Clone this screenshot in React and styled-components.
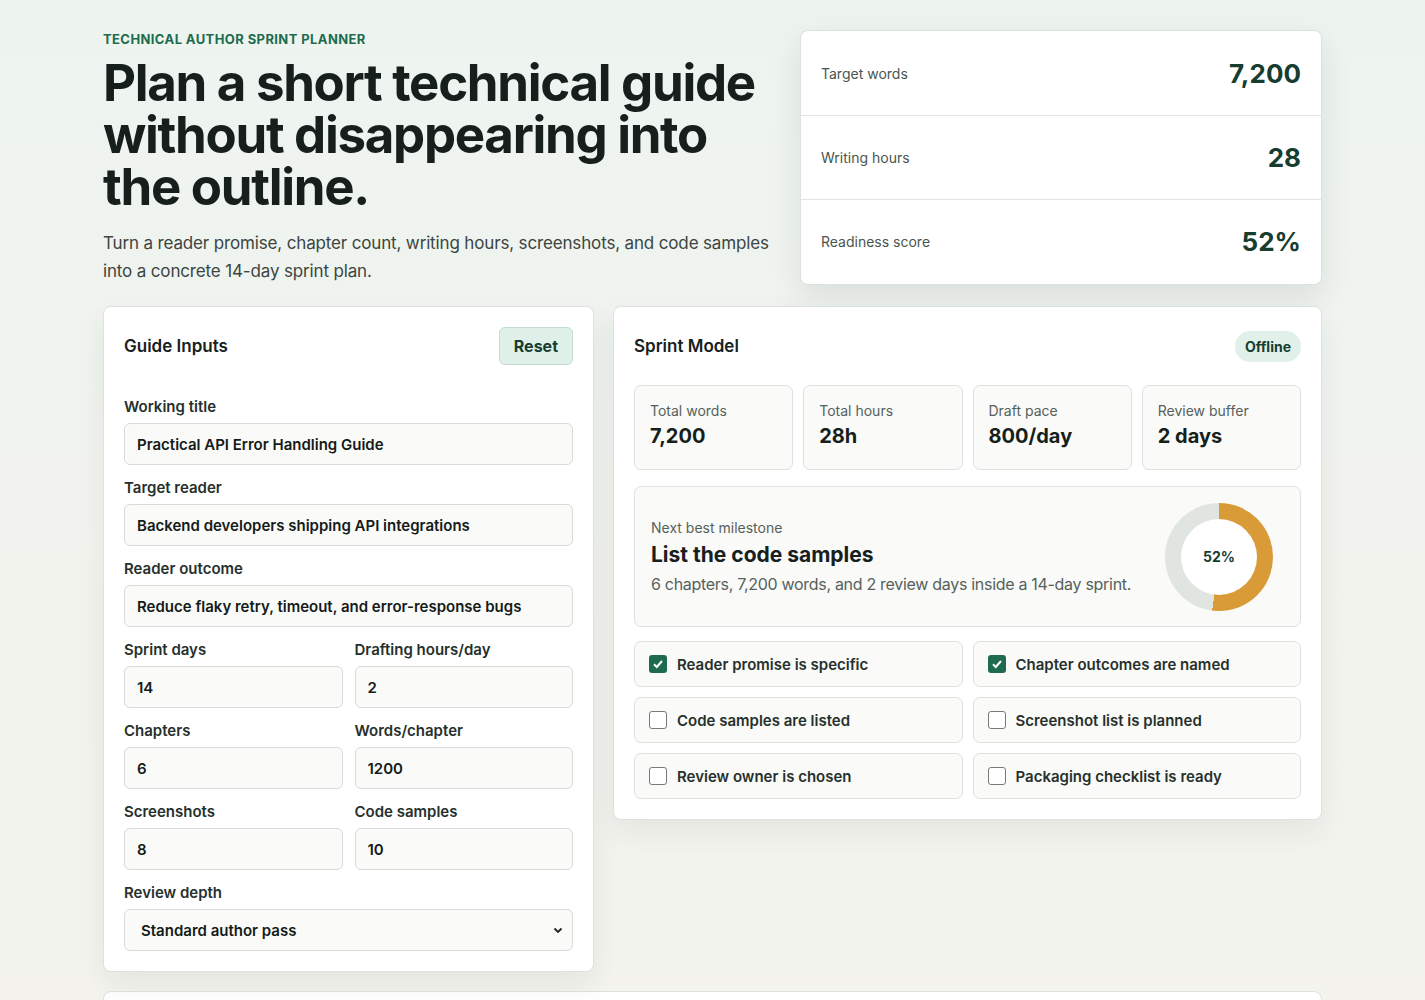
import { createGlobalStyle } from "styled-components";
import styled from "styled-components";

const Global = createGlobalStyle`
  body {
    margin: 0;
    font-family: Inter, "Noto Sans", sans-serif;
    color: #17201c;
    background: linear-gradient(180deg, #edf4f0 0%, #f3f3ee 60%, #f4f3ee 100%);
    min-height: 100vh;
  }
  * { box-sizing: border-box; }
`;

const Page = styled.div`
  width: 1219px;
  margin: 0 auto;
  padding: 30px 0 0 0;
`;

const Header = styled.div`
  display: flex;
  justify-content: space-between;
  gap: 20px;
`;

const Intro = styled.div`
  padding-top: 1px;
  width: 690px;
`;

const Eyebrow = styled.div`
  font-size: 13px;
  font-weight: 700;
  color: #1e6b4f;
  letter-spacing: 0.4px;
`;

const Title = styled.h1`
  margin: 10px 0 0;
  font-size: 51px;
  line-height: 52px;
  font-weight: 700;
  letter-spacing: -1.3px;
  color: #161f1b;
`;

const Lead = styled.p`
  margin: 16px 0 0;
  font-size: 17px;
  line-height: 28px;
  color: #3b4541;
  letter-spacing: -0.15px;
`;

const StatsCard = styled.div`
  width: 522px;
  flex-shrink: 0;
  background: #fff;
  border: 1px solid #dde2de;
  border-radius: 8px;
  box-shadow: 0 12px 30px rgba(30, 50, 40, 0.1);
  overflow: hidden;
`;

const StatRow = styled.div`
  height: 84px;
  display: flex;
  align-items: center;
  justify-content: space-between;
  padding: 0 20px;
  border-top: ${(p) => (p.first ? "none" : "1px solid #e2e6e3")};
`;

const StatLabel = styled.span`
  font-size: 14px;
  color: #4a5550;
`;

const StatValue = styled.span`
  font-size: 26px;
  font-weight: 700;
  color: #173d30;
`;

const Main = styled.div`
  display: grid;
  grid-template-columns: 491px 1fr;
  gap: 19px;
  margin-top: 21px;
  align-items: start;
`;

const Panel = styled.div`
  background: #fff;
  border: 1px solid #dde2de;
  border-radius: 8px;
  padding: 20px;
  box-shadow: 0 12px 30px rgba(30, 50, 40, 0.07);
`;

const PanelHead = styled.div`
  display: flex;
  justify-content: space-between;
  align-items: center;
  height: 38px;
  margin-bottom: ${(p) => p.mb}px;
`;

const PanelTitle = styled.h2`
  margin: 0;
  font-size: 17px;
  font-weight: 600;
`;

const ResetButton = styled.button`
  font-family: inherit;
  font-size: 16px;
  font-weight: 700;
  color: #173d30;
  background: #dff0e8;
  border: 1px solid #c3ddd0;
  border-radius: 6px;
  height: 38px;
  padding: 0 14px;
`;

const Pill = styled.span`
  font-size: 14px;
  font-weight: 700;
  color: #173d30;
  background: #e1f1e9;
  border-radius: 15px;
  padding: 7px 10px;
`;

const Form = styled.div`
  display: flex;
  flex-direction: column;
  gap: 13px;
`;

const Row2 = styled.div`
  display: grid;
  grid-template-columns: 1fr 1fr;
  gap: 12px;
`;

const Field = styled.label`
  display: flex;
  flex-direction: column;
  gap: 7px;
`;

const FieldLabel = styled.span`
  font-size: 15px;
  font-weight: 600;
  color: #26302c;
`;

const Input = styled.div`
  height: 42px;
  border: 1px solid #d6dcd8;
  border-radius: 6px;
  background: #fafaf8;
  display: flex;
  align-items: center;
  justify-content: space-between;
  padding: 0 ${(p) => (p.select ? "8px 0 16px" : "12px")};
  font-size: 15px;
  font-weight: 600;
  color: #141b18;
`;

const Metrics = styled.div`
  display: grid;
  grid-template-columns: repeat(4, 1fr);
  gap: 10px;
`;

const Metric = styled.div`
  height: 85px;
  border: 1px solid #dde2de;
  border-radius: 7px;
  background: #fafaf8;
  padding: 16px 15px;
`;

const MetricLabel = styled.div`
  font-size: 14px;
  color: #56615c;
`;

const MetricValue = styled.div`
  margin-top: 5px;
  font-size: 20px;
  font-weight: 700;
  color: #161f1b;
`;

const Milestone = styled.div`
  margin-top: 16px;
  height: 141px;
  border: 1px solid #dde2de;
  border-radius: 7px;
  background: #fafaf8;
  display: flex;
  align-items: center;
  justify-content: space-between;
  padding: 0 27px 0 16px;
`;

const MsLabel = styled.div`
  font-size: 14px;
  color: #56615c;
`;

const MsTitle = styled.div`
  margin-top: 6px;
  font-size: 21px;
  font-weight: 700;
`;

const MsText = styled.div`
  margin-top: 7px;
  font-size: 16px;
  letter-spacing: -0.3px;
  color: #56615c;
`;

const Donut = styled.div`
  width: 108px;
  height: 108px;
  border-radius: 50%;
  background: conic-gradient(#d99b38 0 52%, #e1e5e1 52% 100%);
  display: flex;
  align-items: center;
  justify-content: center;
`;

const DonutHole = styled.div`
  width: 76px;
  height: 76px;
  border-radius: 50%;
  background: #fff;
  display: flex;
  align-items: center;
  justify-content: center;
  font-size: 14px;
  font-weight: 700;
  color: #173d30;
`;

const Checks = styled.div`
  margin-top: 14px;
  display: grid;
  grid-template-columns: 1fr 1fr;
  gap: 10px;
`;

const Check = styled.div`
  height: 46px;
  border: 1px solid #dde2de;
  border-radius: 7px;
  background: #fafaf8;
  display: flex;
  align-items: center;
  gap: 10px;
  padding: 0 14px;
  font-size: 15px;
  font-weight: 600;
  color: #26302c;
`;

const Box = styled.span`
  width: 18px;
  height: 18px;
  border-radius: 3px;
  display: flex;
  align-items: center;
  justify-content: center;
  background: ${(p) => (p.on ? "#1f6b50" : "#fff")};
  border: ${(p) => (p.on ? "none" : "1.5px solid #767d79")};
`;

const Footer = styled.div`
  margin-top: 19px;
  height: 40px;
  background: #fff;
  border: 1px solid #dde2de;
  border-radius: 8px 8px 0 0;
`;

const fields2 = [
  [["Sprint days", "14"], ["Drafting hours/day", "2"]],
  [["Chapters", "6"], ["Words/chapter", "1200"]],
  [["Screenshots", "8"], ["Code samples", "10"]],
];

const checks = [
  ["Reader promise is specific", true],
  ["Chapter outcomes are named", true],
  ["Code samples are listed", false],
  ["Screenshot list is planned", false],
  ["Review owner is chosen", false],
  ["Packaging checklist is ready", false],
];

export default function App() {
  return (
    <>
      <Global />
      <Page>
        <Header>
          <Intro>
            <Eyebrow>TECHNICAL AUTHOR SPRINT PLANNER</Eyebrow>
            <Title>Plan a short technical guide without disappearing into the outline.</Title>
            <Lead>
              Turn a reader promise, chapter count, writing hours, screenshots, and code samples into a concrete
              14-day sprint plan.
            </Lead>
          </Intro>
          <StatsCard>
            {[["Target words", "7,200"], ["Writing hours", "28"], ["Readiness score", "52%"]].map(([l, v], i) => (
              <StatRow key={l} first={i === 0}>
                <StatLabel>{l}</StatLabel>
                <StatValue>{v}</StatValue>
              </StatRow>
            ))}
          </StatsCard>
        </Header>
        <Main>
          <Panel>
            <PanelHead mb={32}>
              <PanelTitle>Guide Inputs</PanelTitle>
              <ResetButton>Reset</ResetButton>
            </PanelHead>
            <Form>
              <Field>
                <FieldLabel>Working title</FieldLabel>
                <Input>Practical API Error Handling Guide</Input>
              </Field>
              <Field>
                <FieldLabel>Target reader</FieldLabel>
                <Input>Backend developers shipping API integrations</Input>
              </Field>
              <Field>
                <FieldLabel>Reader outcome</FieldLabel>
                <Input>Reduce flaky retry, timeout, and error-response bugs</Input>
              </Field>
              {fields2.map((row, i) => (
                <Row2 key={i}>
                  {row.map(([l, v]) => (
                    <Field key={l}>
                      <FieldLabel>{l}</FieldLabel>
                      <Input>{v}</Input>
                    </Field>
                  ))}
                </Row2>
              ))}
              <Field>
                <FieldLabel>Review depth</FieldLabel>
                <Input select>
                  Standard author pass
                  <svg width="12" height="12" viewBox="0 0 12 12">
                    <path d="M2.5 4.5 6 8l3.5-3.5" fill="none" stroke="#222" strokeWidth="1.8" />
                  </svg>
                </Input>
              </Field>
            </Form>
          </Panel>
          <Panel>
            <PanelHead mb={20}>
              <PanelTitle>Sprint Model</PanelTitle>
              <Pill>Offline</Pill>
            </PanelHead>
            <Metrics>
              {[["Total words", "7,200"], ["Total hours", "28h"], ["Draft pace", "800/day"], ["Review buffer", "2 days"]].map(
                ([l, v]) => (
                  <Metric key={l}>
                    <MetricLabel>{l}</MetricLabel>
                    <MetricValue>{v}</MetricValue>
                  </Metric>
                )
              )}
            </Metrics>
            <Milestone>
              <div>
                <MsLabel>Next best milestone</MsLabel>
                <MsTitle>List the code samples</MsTitle>
                <MsText>6 chapters, 7,200 words, and 2 review days inside a 14-day sprint.</MsText>
              </div>
              <Donut>
                <DonutHole>52%</DonutHole>
              </Donut>
            </Milestone>
            <Checks>
              {checks.map(([t, on]) => (
                <Check key={t}>
                  <Box on={on}>
                    {on && (
                      <svg width="12" height="12" viewBox="0 0 12 12">
                        <path d="M2 6.2 4.8 9 10 3" fill="none" stroke="#fff" strokeWidth="2" />
                      </svg>
                    )}
                  </Box>
                  {t}
                </Check>
              ))}
            </Checks>
          </Panel>
        </Main>
        <Footer />
      </Page>
    </>
  );
}
